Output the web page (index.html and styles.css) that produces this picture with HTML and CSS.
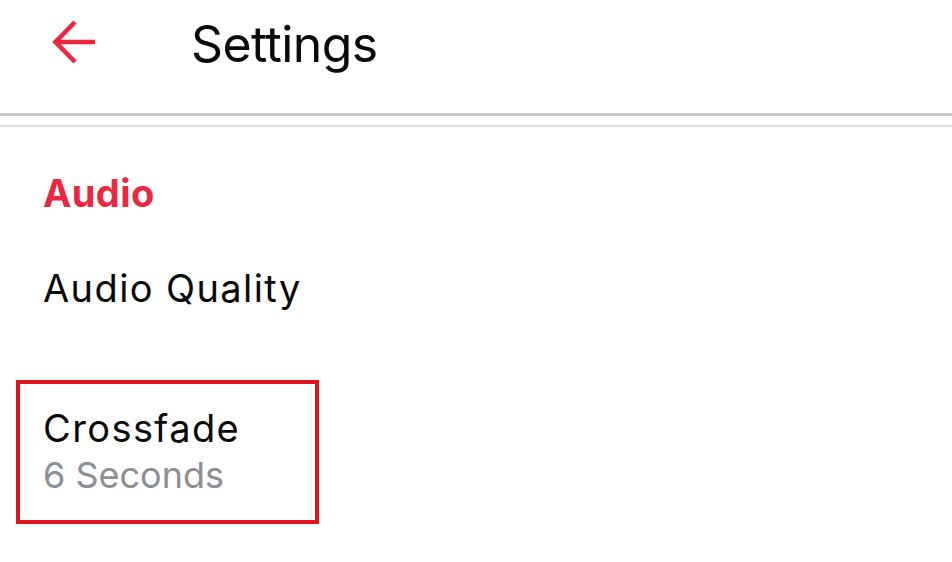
FILE: index.html
```html
<!DOCTYPE html>
<html lang="en">
<head>
<meta charset="utf-8">
<title>Settings</title>
<link rel="stylesheet" href="styles.css">
</head>
<body>
<header class="topbar">
  <svg class="back" width="46" height="44" viewBox="0 0 46 44" aria-hidden="true">
    <path d="M44 22 H4.5 M24 2 L4.5 22 L24 42" fill="none" stroke="#ef2640" stroke-width="4.6" stroke-linecap="butt" stroke-linejoin="miter"/>
  </svg>
  <h1 class="title">Settings</h1>
</header>
<div class="divider"></div>
<main class="content">
  <h2 class="section">Audio</h2>
  <div class="row">Audio Quality</div>
  <div class="row boxed">
    <div class="row-title">Crossfade</div>
    <div class="row-sub">6 Seconds</div>
  </div>
</main>
</body>
</html>
```
FILE: styles.css
```css
html, body {
  margin: 0;
  padding: 0;
  background: #ffffff;
  font-family: Inter, "Noto Sans", "Liberation Sans", sans-serif;
  color: #0a0a0a;
}

.topbar {
  display: flex;
  align-items: flex-start;
  height: 113px;
  border-bottom: 3px solid #c9c9c9;
  box-sizing: content-box;
}

.back {
  display: block;
  margin: 20px 0 0 51px;
}

.title {
  margin: 19px 0 0 94px;
  font-size: 50px;
  font-weight: 400;
  line-height: 50px;
  letter-spacing: -0.6px;
}

.divider {
  margin-top: 9px;
  border-top: 2px solid #dcdcdc;
}

.content {
  padding-left: 16px;
}

.section {
  margin: 43px 0 0 27px;
  font-size: 38px;
  font-weight: 700;
  line-height: 46px;
  letter-spacing: 0.4px;
  color: #ec2841;
}

.row {
  margin: 49px 0 0 27px;
  font-size: 38px;
  line-height: 46px;
  letter-spacing: 1.4px;
}

.boxed {
  margin: 69px 0 0 0;
  width: 303px;
  box-sizing: border-box;
  border: 4px solid #e0141b;
  padding: 21px 0 25px 23px;
  letter-spacing: 0;
}

.row-title {
  font-size: 38px;
  line-height: 46px;
  letter-spacing: 1.4px;
}

.row-sub {
  margin-top: 4px;
  font-size: 36px;
  line-height: 40px;
  letter-spacing: 0;
  color: #8e8e93;
}
```
